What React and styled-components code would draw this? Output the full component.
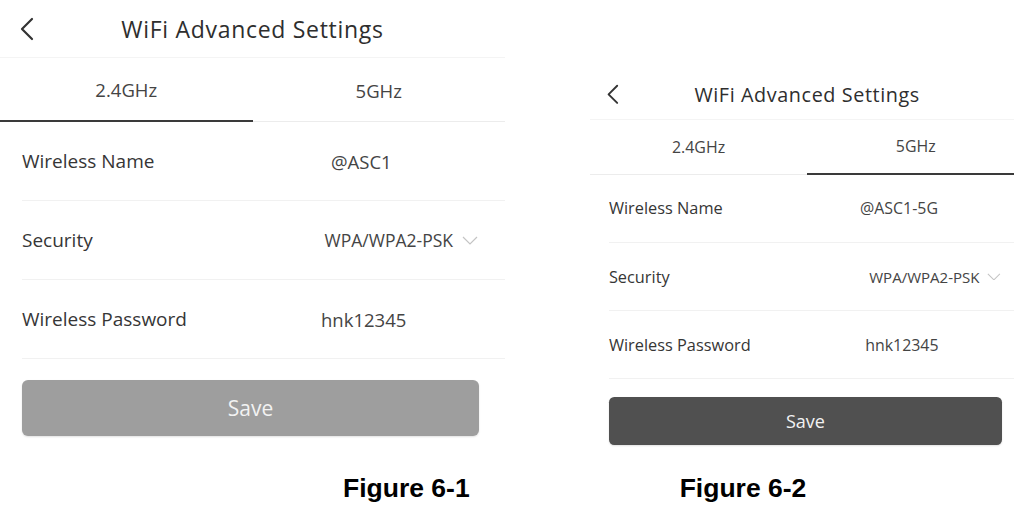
import styled, { createGlobalStyle } from "styled-components";

const GlobalStyle = createGlobalStyle`
  html, body {
    margin: 0;
    background: #fff;
  }
  body {
    font-family: "Open Sans", "Liberation Sans", sans-serif;
    color: #333;
  }
`;

const Page = styled.div`
  width: 1014px;
  height: 520px;
  overflow: hidden;
`;

const Figures = styled.div`
  display: flex;
  align-items: flex-start;
  height: 443px;
`;

const Panel = styled.div`
  --s: ${(p) => p.$scale};
  flex: none;
  width: calc(505px * var(--s));
  margin-left: ${(p) => p.$left}px;
  margin-top: ${(p) => p.$top}px;
`;

const Header = styled.div`
  display: grid;
  grid-template-columns: 1fr auto 1fr;
  align-items: center;
  height: calc(58px * var(--s));
  border-bottom: 1px solid #f4f4f4;
  box-sizing: border-box;
`;

const Back = styled.svg`
  width: calc(16px * var(--s));
  height: calc(24px * var(--s));
  margin-left: calc(19px * var(--s));
`;

const Title = styled.h1`
  margin: 0;
  font-size: calc(23px * var(--s));
  letter-spacing: calc(0.7px * var(--s));
  font-weight: 400;
  color: #2e2e2e;
`;

const Tabs = styled.div`
  display: grid;
  grid-template-columns: 1fr 1fr;
`;

const Tab = styled.div`
  display: flex;
  align-items: center;
  justify-content: center;
  height: calc(64px * var(--s));
  box-sizing: border-box;
  font-size: calc(18.5px * var(--s));
  color: #444;
  border-bottom: ${(p) => (p.$active ? "2px solid #3a3a3a" : "1px solid #ececec")};
  padding-top: ${(p) => (p.$active ? "0" : "1px")};
`;

const Row = styled.div`
  display: flex;
  align-items: center;
  height: calc(78px * var(--s));
  margin-left: calc(22px * var(--s));
  border-bottom: 1px solid #f1f1f1;
`;

const Label = styled.span`
  flex: none;
  width: calc(${(p) => p.$w}px * var(--s));
  font-size: calc(19px * var(--s));
  color: #363636;
`;

const Value = styled.span`
  font-size: calc(18.5px * var(--s));
  color: #444;
`;

const Select = styled.span`
  display: flex;
  align-items: center;
  gap: calc(9px * var(--s));
  margin-left: auto;
  margin-right: calc(27px * var(--s));
  font-size: calc(17.5px * var(--s));
  color: #444;
`;

const Caret = styled.svg`
  width: calc(16px * var(--s));
  height: calc(9px * var(--s));
`;

const SaveButton = styled.button`
  display: block;
  width: calc(457px * var(--s));
  height: calc(56px * var(--s));
  margin: calc(21px * var(--s)) 0 0 calc(22px * var(--s));
  border: none;
  border-radius: calc(6px * var(--s));
  background: ${(p) => (p.$enabled ? "#505050" : "#9e9e9e")};
  color: #f2f2f2;
  font-family: inherit;
  font-size: calc(21px * var(--s));
  box-shadow: 0 1px 2px rgba(0, 0, 0, 0.12);
`;

const Captions = styled.div`
  display: flex;
  gap: 210px;
  margin-top: 30px;
  padding-left: 343px;
`;

const Caption = styled.div`
  font-family: "Liberation Sans", Arial, sans-serif;
  font-weight: 700;
  font-size: 26.5px;
  color: #000;
`;

const figures = [
  {
    scale: 1,
    left: 0,
    top: 0,
    band: "2.4",
    name: "@ASC1",
    nameX: 331,
    passX: 321,
    enabled: false,
  },
  {
    scale: 0.86,
    left: 85,
    top: 70,
    band: "5",
    name: "@ASC1-5G",
    nameX: 314,
    passX: 320,
    enabled: true,
  },
];

const Figure = ({ f }) => (
  <Panel $scale={f.scale} $left={f.left} $top={f.top}>
    <Header>
      <Back viewBox="0 0 16 24">
        <polyline
          points="13,2 3,12 13,22"
          fill="none"
          stroke="#333"
          strokeWidth="2.2"
          strokeLinecap="round"
          strokeLinejoin="round"
        />
      </Back>
      <Title>WiFi Advanced Settings</Title>
      <span />
    </Header>
    <Tabs>
      <Tab $active={f.band === "2.4"}>2.4GHz</Tab>
      <Tab $active={f.band === "5"}>5GHz</Tab>
    </Tabs>
    <Row>
      <Label $w={f.nameX - 22}>Wireless Name</Label>
      <Value>{f.name}</Value>
    </Row>
    <Row>
      <Label $w={200}>Security</Label>
      <Select>
        WPA/WPA2-PSK
        <Caret viewBox="0 0 16 9">
          <polyline points="1,1 8,8 15,1" fill="none" stroke="#c4c4c4" strokeWidth="1.2" />
        </Caret>
      </Select>
    </Row>
    <Row>
      <Label $w={f.passX - 22}>Wireless Password</Label>
      <Value>hnk12345</Value>
    </Row>
    <SaveButton type="button" $enabled={f.enabled}>
      Save
    </SaveButton>
  </Panel>
);

const App = () => (
  <Page>
    <GlobalStyle />
    <Figures>
      {figures.map((f) => (
        <Figure key={f.band} f={f} />
      ))}
    </Figures>
    <Captions>
      <Caption>Figure 6-1</Caption>
      <Caption>Figure 6-2</Caption>
    </Captions>
  </Page>
);

export default App;
